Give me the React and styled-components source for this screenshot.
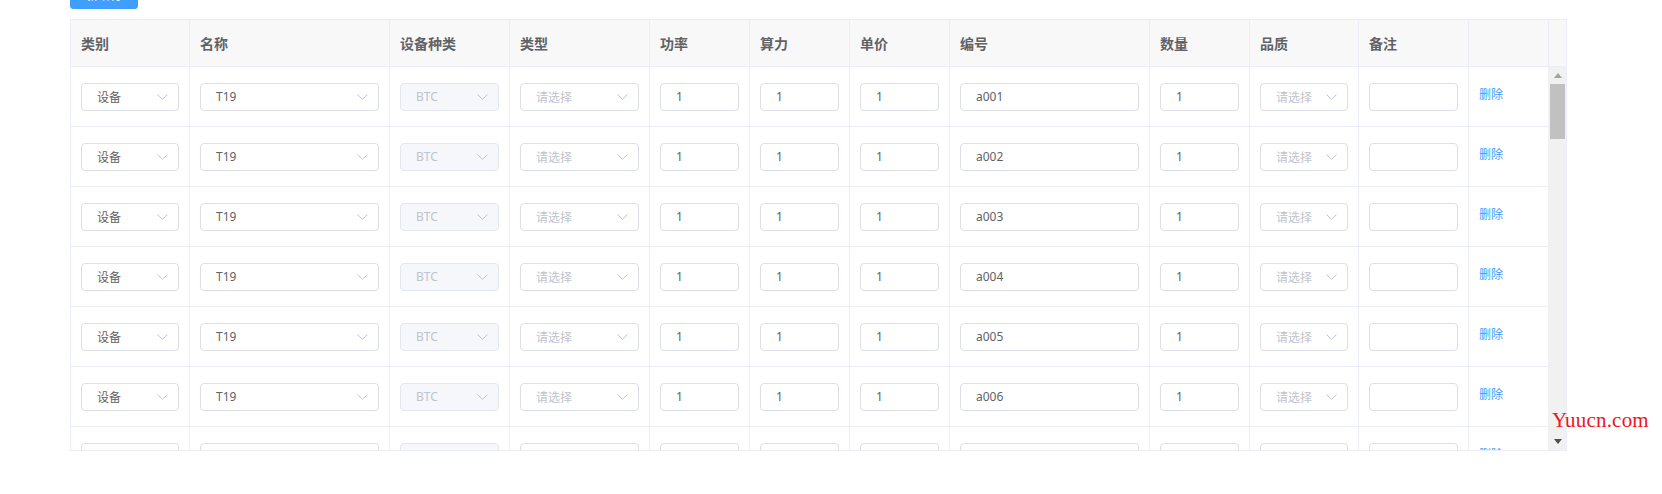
import React from "react";
import styled, { createGlobalStyle } from "styled-components";

const Global = createGlobalStyle`
  html, body { margin: 0; padding: 0; background: #fff; }
  body { font-family: "Noto Sans", "Noto Sans CJK SC", sans-serif; overflow: hidden; }
  * { box-sizing: border-box; }
`;

const COLS = [119, 200, 120, 140, 100, 100, 100, 200, 100, 109, 110, 80];
const GRID = COLS.map((w) => `${w}px`).join(" ") + " 18px";

const Page = styled.div`
  position: relative;
  width: 1662px;
  height: 494px;
  padding-left: 70px;
`;

const AddButton = styled.button`
  display: block;
  margin-top: -19px;
  width: 68px;
  height: 28px;
  border: 1px solid #409eff;
  background: #409eff;
  color: #fff;
  border-radius: 3px;
  font-family: inherit;
  font-size: 12px;
  padding: 0;
`;

const Table = styled.div`
  margin-top: 10px;
  width: 1497px;
  border: 1px solid #ebeef5;
  height: 432px;
  overflow: hidden;
  display: flex;
  flex-direction: column;
`;

const HeadRow = styled.div`
  display: grid;
  grid-template-columns: ${GRID};
  height: 47px;
  background: #f8f8f9;
  border-bottom: 1px solid #ebeef5;
  flex: none;
`;

const HeadCell = styled.div`
  display: flex;
  align-items: center;
  padding: 0 10px;
  border-right: ${(p) => (p.$last ? "none" : "1px solid #ebeef5")};
  font-size: 14px;
  font-weight: 700;
  color: #606266;
  white-space: nowrap;
`;

const BodyWrap = styled.div`
  display: flex;
  flex: 1;
  min-height: 0;
`;

const Rows = styled.div`
  width: 1478px;
  overflow: hidden;
`;

const Row = styled.div`
  display: grid;
  grid-template-columns: ${COLS.map((w) => `${w}px`).join(" ")};
  height: 60px;
  border-bottom: 1px solid #ebeef5;
`;

const Cell = styled.div`
  display: flex;
  align-items: center;
  padding: 0 10px ${(p) => (p.$action ? "6px" : "0")};
  border-right: 1px solid #ebeef5;
`;

const Box = styled.div`
  position: relative;
  width: 100%;
  height: 28px;
  border: 1px solid ${(p) => (p.$disabled ? "#e4e7ed" : "#dcdfe6")};
  background: ${(p) => (p.$disabled ? "#f5f7fa" : "#fff")};
  border-radius: 4px;
  display: flex;
  align-items: center;
  padding: 0 30px 0 15px;
  font-size: 12px;
  color: ${(p) => (p.$muted ? "#c0c4cc" : "#606266")};
  white-space: nowrap;
  overflow: hidden;
`;

const Arrow = styled.svg`
  position: absolute;
  right: 10px;
  top: 50%;
  margin-top: -3px;
  width: 11px;
  height: 6px;
`;

const LinkBtn = styled.span`
  font-size: 12px;
  color: #409eff;
  cursor: pointer;
`;

const Scrollbar = styled.div`
  width: 18px;
  background: #f1f1f1;
  display: flex;
  flex-direction: column;
  align-items: center;
  padding: 0 1px 0 2px;
  position: relative;
`;

const ArrowBtn = styled.div`
  height: 17px;
  width: 100%;
  display: flex;
  align-items: center;
  justify-content: center;
  flex: none;
`;

const Thumb = styled.div`
  width: 100%;
  height: 55px;
  background: #c1c1c1;
  flex: none;
`;

const Spacer = styled.div`
  flex: 1;
`;

const Watermark = styled.div`
  position: absolute;
  left: 1552px;
  top: 427px;
  font-family: "Liberation Serif", serif;
  font-size: 21px;
  color: #f01422;
  letter-spacing: 0.2px;
`;

const Chevron = () => (
  <Arrow viewBox="0 0 11 6">
    <polyline points="0.5,0.5 5.5,5.3 10.5,0.5" fill="none" stroke="#c0c4cc" strokeWidth="1" />
  </Arrow>
);

const Select = ({ value, placeholder, disabled }) => (
  <Box $disabled={disabled} $muted={disabled || !value}>
    {value || placeholder}
    <Chevron />
  </Box>
);

const Input = ({ value }) => <Box as="div" style={undefined}>{value}</Box>;

const headers = ["类别", "名称", "设备种类", "类型", "功率", "算力", "单价", "编号", "数量", "品质", "备注", "", ""];

const rows = ["a001", "a002", "a003", "a004", "a005", "a006", "a007", "a008"];

export default function App() {
  return (
    <Page>
      <Global />
      <AddButton>新增行</AddButton>
      <Table>
        <HeadRow>
          {headers.map((h, i) => (
            <HeadCell key={i} $last={i === headers.length - 1}>{h}</HeadCell>
          ))}
        </HeadRow>
        <BodyWrap>
          <Rows>
            {rows.map((code) => (
              <Row key={code}>
                <Cell><Select value="设备" /></Cell>
                <Cell><Select value="T19" /></Cell>
                <Cell><Select value="BTC" disabled /></Cell>
                <Cell><Select placeholder="请选择" /></Cell>
                <Cell><Input value="1" /></Cell>
                <Cell><Input value="1" /></Cell>
                <Cell><Input value="1" /></Cell>
                <Cell><Input value={code} /></Cell>
                <Cell><Input value="1" /></Cell>
                <Cell><Select placeholder="请选择" /></Cell>
                <Cell><Input value="" /></Cell>
                <Cell $action><LinkBtn>删除</LinkBtn></Cell>
              </Row>
            ))}
          </Rows>
          <Scrollbar>
            <ArrowBtn>
              <svg width="8" height="5" viewBox="0 0 8 5"><polygon points="4,0 8,5 0,5" fill="#a3a3a3" /></svg>
            </ArrowBtn>
            <Thumb />
            <Spacer />
            <ArrowBtn>
              <svg width="8" height="5" viewBox="0 0 8 5"><polygon points="0,0 8,0 4,5" fill="#505050" /></svg>
            </ArrowBtn>
          </Scrollbar>
        </BodyWrap>
      </Table>
      <Watermark>Yuucn.com</Watermark>
    </Page>
  );
}
